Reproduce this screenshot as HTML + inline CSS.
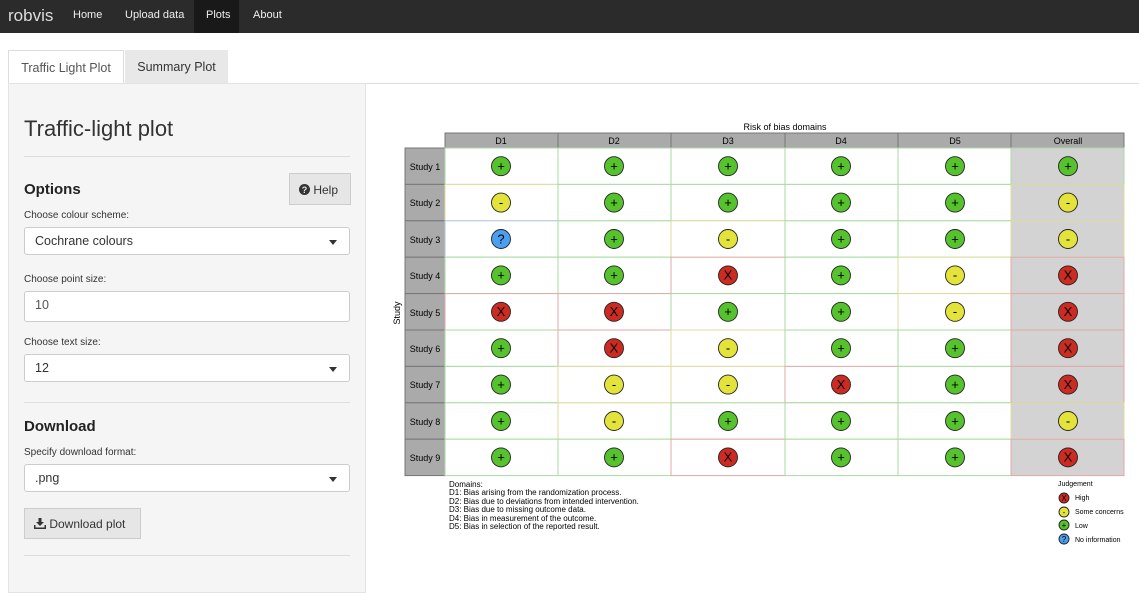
<!DOCTYPE html>
<html><head><meta charset="utf-8"><style>
*{box-sizing:border-box;margin:0;padding:0}
body{width:1139px;height:576px;overflow:hidden;background:#fff;font-family:"Liberation Sans",sans-serif;color:#333;position:relative}
.nav{position:absolute;left:0;top:0;width:1139px;height:33px;background:#2b2b2b}
.nav span{position:absolute;top:9px;color:#eee;font-size:11px}
.nav .brand{left:8px;top:6px;font-size:17px;color:#ddd}
.nav .act{position:absolute;left:194px;top:0;width:45px;height:33px;background:#191919}
.tab{position:absolute;top:50px;height:34px;font-size:12.5px;padding:10px 0 0;text-align:center}
.side{position:absolute;left:8px;top:83px;width:358px;height:510px;background:#f5f5f5;border:1px solid #e3e3e3}
.side>*{position:absolute}
.lbl{font-size:10px;color:#333;left:15px}
.inp{left:15px;width:326px;height:28px;background:#fff;border:1px solid #ccc;border-radius:3px;font-size:12.5px;padding:6px 10px}
.car{position:absolute;right:12px;top:12px;width:0;height:0;border-left:4px solid transparent;border-right:4px solid transparent;border-top:5px solid #333}
.hr{left:15px;width:326px;height:1px;background:#ddd}
svg text{font-family:"Liberation Sans",sans-serif}
.c rect{fill:#fff;stroke-width:1}
.o rect{fill:#d3d3d3}
.L rect{stroke:#a8dba0}.S rect{stroke:#dcdc9c}.H rect{stroke:#e2a9a9}.N rect{stroke:#a9c6e2}
.c circle{stroke:#222;stroke-width:0.9}
.L circle{fill:#55c22e}.S circle{fill:#e3e33c}.H circle{fill:#cc2b22}.N circle{fill:#4a9ff0}
.c text{font-size:13px;text-anchor:middle;fill:#000}
</style></head><body>
<div class="nav"><div class="act"></div><span class="brand">robvis</span><span style="left:73px">Home</span><span style="left:125px">Upload data</span><span style="left:206px">Plots</span><span style="left:253px">About</span></div>
<div style="position:absolute;left:8px;top:83px;width:1131px;height:1px;background:#ddd"></div>
<div class="tab" style="left:8px;width:116px;background:#fff;border:1px solid #ddd;border-bottom:none;color:#555">Traffic Light Plot</div>
<div class="tab" style="left:125px;width:103px;background:#e8e8e8;color:#333">Summary Plot</div>
<div class="side">
<div style="left:15px;top:32px;font-size:22px;color:#333;font-weight:300">Traffic-light plot</div>
<div class="hr" style="top:72px"></div>
<div style="left:15px;top:97px;font-size:15px;font-weight:bold;color:#222">Options</div>
<div style="left:280px;top:89px;width:62px;height:32px;background:#e6e6e6;border:1px solid #ccc;font-size:12px;padding:9px 0 0 9px"><svg width="11" height="11" style="vertical-align:-1px"><circle cx="5.5" cy="5.5" r="5.5" fill="#333"/><text x="5.5" y="9" font-size="9" font-weight="bold" fill="#e6e6e6" text-anchor="middle">?</text></svg> Help</div>
<div class="lbl" style="top:126px">Choose colour scheme:</div>
<div class="inp" style="top:143px">Cochrane colours<div class="car"></div></div>
<div class="lbl" style="top:190px">Choose point size:</div>
<div class="inp" style="top:207px;height:31px;color:#555">10</div>
<div class="lbl" style="top:253px">Choose text size:</div>
<div class="inp" style="top:270px">12<div class="car"></div></div>
<div class="hr" style="top:318px"></div>
<div style="left:15px;top:334px;font-size:15px;font-weight:bold;color:#222">Download</div>
<div class="lbl" style="top:363px">Specify download format:</div>
<div class="inp" style="top:380px">.png<div class="car"></div></div>
<div style="left:15px;top:424px;width:117px;height:31px;background:#e6e6e6;border:1px solid #ccc;font-size:12px;padding:8px 0 0 9px"><svg width="12" height="11" style="vertical-align:-1px"><path d="M4.5 0h3v4h2.5L6 8 2 4h2.5z M0 7h1.5v2.5h9V7H12v4H0z" fill="#333"/></svg> Download plot</div>
<div class="hr" style="top:471px"></div>
</div>
<svg style="position:absolute;left:0;top:0" width="1139" height="576">
<text x="785" y="130" font-size="9" text-anchor="middle">Risk of bias domains</text>
<g font-size="9" text-anchor="middle">
<rect x="445" y="133" width="679" height="15" fill="#aaa" stroke="#777"/>
<g stroke="#777"><line x1="558" y1="133" x2="558" y2="148"/><line x1="671" y1="133" x2="671" y2="148"/><line x1="785" y1="133" x2="785" y2="148"/><line x1="898" y1="133" x2="898" y2="148"/><line x1="1011" y1="133" x2="1011" y2="148"/></g>
<text x="501" y="144">D1</text><text x="614" y="144">D2</text><text x="728" y="144">D3</text><text x="841" y="144">D4</text><text x="955" y="144">D5</text><text x="1068" y="144">Overall</text>
</g>
<g font-size="9" text-anchor="middle">
<g fill="#aaa" stroke="#777">
<rect x="405" y="148" width="40" height="36.4"/><rect x="405" y="184.4" width="40" height="36.4"/><rect x="405" y="220.8" width="40" height="36.4"/><rect x="405" y="257.2" width="40" height="36.4"/><rect x="405" y="293.6" width="40" height="36.4"/><rect x="405" y="330" width="40" height="36.4"/><rect x="405" y="366.4" width="40" height="36.4"/><rect x="405" y="402.8" width="40" height="36.4"/><rect x="405" y="439.2" width="40" height="36.4"/></g>
<text x="425" y="170">Study 1</text><text x="425" y="206">Study 2</text><text x="425" y="243">Study 3</text><text x="425" y="279">Study 4</text><text x="425" y="316">Study 5</text><text x="425" y="352">Study 6</text><text x="425" y="388">Study 7</text><text x="425" y="425">Study 8</text><text x="425" y="461">Study 9</text>
<text transform="translate(400,313) rotate(-90)">Study</text>
</g>
<g transform="translate(0,148)">
<g class="c L" transform="translate(445,0)"><rect width="113" height="36.4"/><circle cx="56" cy="18.2" r="9.5"/><text x="56" y="22.5">+</text></g>
<g class="c L" transform="translate(558,0)"><rect width="113" height="36.4"/><circle cx="56" cy="18.2" r="9.5"/><text x="56" y="22.5">+</text></g>
<g class="c L" transform="translate(671,0)"><rect width="114" height="36.4"/><circle cx="57" cy="18.2" r="9.5"/><text x="57" y="22.5">+</text></g>
<g class="c L" transform="translate(785,0)"><rect width="113" height="36.4"/><circle cx="56" cy="18.2" r="9.5"/><text x="56" y="22.5">+</text></g>
<g class="c L" transform="translate(898,0)"><rect width="113" height="36.4"/><circle cx="57" cy="18.2" r="9.5"/><text x="57" y="22.5">+</text></g>
<g class="c o L" transform="translate(1011,0)"><rect width="113" height="36.4"/><circle cx="57" cy="18.2" r="9.5"/><text x="57" y="22.5">+</text></g>
</g>
<g transform="translate(0,184.4)">
<g class="c S" transform="translate(445,0)"><rect width="113" height="36.4"/><circle cx="56" cy="18.2" r="9.5"/><text x="56" y="22.5">-</text></g>
<g class="c L" transform="translate(558,0)"><rect width="113" height="36.4"/><circle cx="56" cy="18.2" r="9.5"/><text x="56" y="22.5">+</text></g>
<g class="c L" transform="translate(671,0)"><rect width="114" height="36.4"/><circle cx="57" cy="18.2" r="9.5"/><text x="57" y="22.5">+</text></g>
<g class="c L" transform="translate(785,0)"><rect width="113" height="36.4"/><circle cx="56" cy="18.2" r="9.5"/><text x="56" y="22.5">+</text></g>
<g class="c L" transform="translate(898,0)"><rect width="113" height="36.4"/><circle cx="57" cy="18.2" r="9.5"/><text x="57" y="22.5">+</text></g>
<g class="c o S" transform="translate(1011,0)"><rect width="113" height="36.4"/><circle cx="57" cy="18.2" r="9.5"/><text x="57" y="22.5">-</text></g>
</g>
<g transform="translate(0,220.8)">
<g class="c N" transform="translate(445,0)"><rect width="113" height="36.4"/><circle cx="56" cy="18.2" r="9.5"/><text x="56" y="22.5">?</text></g>
<g class="c L" transform="translate(558,0)"><rect width="113" height="36.4"/><circle cx="56" cy="18.2" r="9.5"/><text x="56" y="22.5">+</text></g>
<g class="c S" transform="translate(671,0)"><rect width="114" height="36.4"/><circle cx="57" cy="18.2" r="9.5"/><text x="57" y="22.5">-</text></g>
<g class="c L" transform="translate(785,0)"><rect width="113" height="36.4"/><circle cx="56" cy="18.2" r="9.5"/><text x="56" y="22.5">+</text></g>
<g class="c L" transform="translate(898,0)"><rect width="113" height="36.4"/><circle cx="57" cy="18.2" r="9.5"/><text x="57" y="22.5">+</text></g>
<g class="c o S" transform="translate(1011,0)"><rect width="113" height="36.4"/><circle cx="57" cy="18.2" r="9.5"/><text x="57" y="22.5">-</text></g>
</g>
<g transform="translate(0,257.2)">
<g class="c L" transform="translate(445,0)"><rect width="113" height="36.4"/><circle cx="56" cy="18.2" r="9.5"/><text x="56" y="22.5">+</text></g>
<g class="c L" transform="translate(558,0)"><rect width="113" height="36.4"/><circle cx="56" cy="18.2" r="9.5"/><text x="56" y="22.5">+</text></g>
<g class="c H" transform="translate(671,0)"><rect width="114" height="36.4"/><circle cx="57" cy="18.2" r="9.5"/><text x="57" y="22.5">X</text></g>
<g class="c L" transform="translate(785,0)"><rect width="113" height="36.4"/><circle cx="56" cy="18.2" r="9.5"/><text x="56" y="22.5">+</text></g>
<g class="c S" transform="translate(898,0)"><rect width="113" height="36.4"/><circle cx="57" cy="18.2" r="9.5"/><text x="57" y="22.5">-</text></g>
<g class="c o H" transform="translate(1011,0)"><rect width="113" height="36.4"/><circle cx="57" cy="18.2" r="9.5"/><text x="57" y="22.5">X</text></g>
</g>
<g transform="translate(0,293.6)">
<g class="c H" transform="translate(445,0)"><rect width="113" height="36.4"/><circle cx="56" cy="18.2" r="9.5"/><text x="56" y="22.5">X</text></g>
<g class="c H" transform="translate(558,0)"><rect width="113" height="36.4"/><circle cx="56" cy="18.2" r="9.5"/><text x="56" y="22.5">X</text></g>
<g class="c L" transform="translate(671,0)"><rect width="114" height="36.4"/><circle cx="57" cy="18.2" r="9.5"/><text x="57" y="22.5">+</text></g>
<g class="c L" transform="translate(785,0)"><rect width="113" height="36.4"/><circle cx="56" cy="18.2" r="9.5"/><text x="56" y="22.5">+</text></g>
<g class="c S" transform="translate(898,0)"><rect width="113" height="36.4"/><circle cx="57" cy="18.2" r="9.5"/><text x="57" y="22.5">-</text></g>
<g class="c o H" transform="translate(1011,0)"><rect width="113" height="36.4"/><circle cx="57" cy="18.2" r="9.5"/><text x="57" y="22.5">X</text></g>
</g>
<g transform="translate(0,330)">
<g class="c L" transform="translate(445,0)"><rect width="113" height="36.4"/><circle cx="56" cy="18.2" r="9.5"/><text x="56" y="22.5">+</text></g>
<g class="c H" transform="translate(558,0)"><rect width="113" height="36.4"/><circle cx="56" cy="18.2" r="9.5"/><text x="56" y="22.5">X</text></g>
<g class="c S" transform="translate(671,0)"><rect width="114" height="36.4"/><circle cx="57" cy="18.2" r="9.5"/><text x="57" y="22.5">-</text></g>
<g class="c L" transform="translate(785,0)"><rect width="113" height="36.4"/><circle cx="56" cy="18.2" r="9.5"/><text x="56" y="22.5">+</text></g>
<g class="c L" transform="translate(898,0)"><rect width="113" height="36.4"/><circle cx="57" cy="18.2" r="9.5"/><text x="57" y="22.5">+</text></g>
<g class="c o H" transform="translate(1011,0)"><rect width="113" height="36.4"/><circle cx="57" cy="18.2" r="9.5"/><text x="57" y="22.5">X</text></g>
</g>
<g transform="translate(0,366.4)">
<g class="c L" transform="translate(445,0)"><rect width="113" height="36.4"/><circle cx="56" cy="18.2" r="9.5"/><text x="56" y="22.5">+</text></g>
<g class="c S" transform="translate(558,0)"><rect width="113" height="36.4"/><circle cx="56" cy="18.2" r="9.5"/><text x="56" y="22.5">-</text></g>
<g class="c S" transform="translate(671,0)"><rect width="114" height="36.4"/><circle cx="57" cy="18.2" r="9.5"/><text x="57" y="22.5">-</text></g>
<g class="c H" transform="translate(785,0)"><rect width="113" height="36.4"/><circle cx="56" cy="18.2" r="9.5"/><text x="56" y="22.5">X</text></g>
<g class="c L" transform="translate(898,0)"><rect width="113" height="36.4"/><circle cx="57" cy="18.2" r="9.5"/><text x="57" y="22.5">+</text></g>
<g class="c o H" transform="translate(1011,0)"><rect width="113" height="36.4"/><circle cx="57" cy="18.2" r="9.5"/><text x="57" y="22.5">X</text></g>
</g>
<g transform="translate(0,402.8)">
<g class="c L" transform="translate(445,0)"><rect width="113" height="36.4"/><circle cx="56" cy="18.2" r="9.5"/><text x="56" y="22.5">+</text></g>
<g class="c S" transform="translate(558,0)"><rect width="113" height="36.4"/><circle cx="56" cy="18.2" r="9.5"/><text x="56" y="22.5">-</text></g>
<g class="c L" transform="translate(671,0)"><rect width="114" height="36.4"/><circle cx="57" cy="18.2" r="9.5"/><text x="57" y="22.5">+</text></g>
<g class="c L" transform="translate(785,0)"><rect width="113" height="36.4"/><circle cx="56" cy="18.2" r="9.5"/><text x="56" y="22.5">+</text></g>
<g class="c L" transform="translate(898,0)"><rect width="113" height="36.4"/><circle cx="57" cy="18.2" r="9.5"/><text x="57" y="22.5">+</text></g>
<g class="c o S" transform="translate(1011,0)"><rect width="113" height="36.4"/><circle cx="57" cy="18.2" r="9.5"/><text x="57" y="22.5">-</text></g>
</g>
<g transform="translate(0,439.2)">
<g class="c L" transform="translate(445,0)"><rect width="113" height="36.4"/><circle cx="56" cy="18.2" r="9.5"/><text x="56" y="22.5">+</text></g>
<g class="c L" transform="translate(558,0)"><rect width="113" height="36.4"/><circle cx="56" cy="18.2" r="9.5"/><text x="56" y="22.5">+</text></g>
<g class="c H" transform="translate(671,0)"><rect width="114" height="36.4"/><circle cx="57" cy="18.2" r="9.5"/><text x="57" y="22.5">X</text></g>
<g class="c L" transform="translate(785,0)"><rect width="113" height="36.4"/><circle cx="56" cy="18.2" r="9.5"/><text x="56" y="22.5">+</text></g>
<g class="c L" transform="translate(898,0)"><rect width="113" height="36.4"/><circle cx="57" cy="18.2" r="9.5"/><text x="57" y="22.5">+</text></g>
<g class="c o H" transform="translate(1011,0)"><rect width="113" height="36.4"/><circle cx="57" cy="18.2" r="9.5"/><text x="57" y="22.5">X</text></g>
</g>
<g font-size="8" fill="#000">
<text x="449" y="487">Domains:</text>
<text x="449" y="495">D1: Bias arising from the randomization process.</text>
<text x="449" y="504">D2: Bias due to deviations from intended intervention.</text>
<text x="449" y="512">D3: Bias due to missing outcome data.</text>
<text x="449" y="521">D4: Bias in measurement of the outcome.</text>
<text x="449" y="529">D5: Bias in selection of the reported result.</text>
</g>
<g font-size="7" fill="#000">
<text x="1058" y="486">Judgement</text>
<g class="c H" transform="translate(1064,498)"><circle r="5"/><text y="3" style="font-size:8px">X</text></g><text x="1075" y="500">High</text>
<g class="c S" transform="translate(1064,512)"><circle r="5"/><text y="3" style="font-size:8px">-</text></g><text x="1075" y="514">Some concerns</text>
<g class="c L" transform="translate(1064,525)"><circle r="5"/><text y="3" style="font-size:8px">+</text></g><text x="1075" y="528">Low</text>
<g class="c N" transform="translate(1064,539)"><circle r="5"/><text y="3" style="font-size:8px">?</text></g><text x="1075" y="542">No information</text>
</g>
</svg>
</body></html>
